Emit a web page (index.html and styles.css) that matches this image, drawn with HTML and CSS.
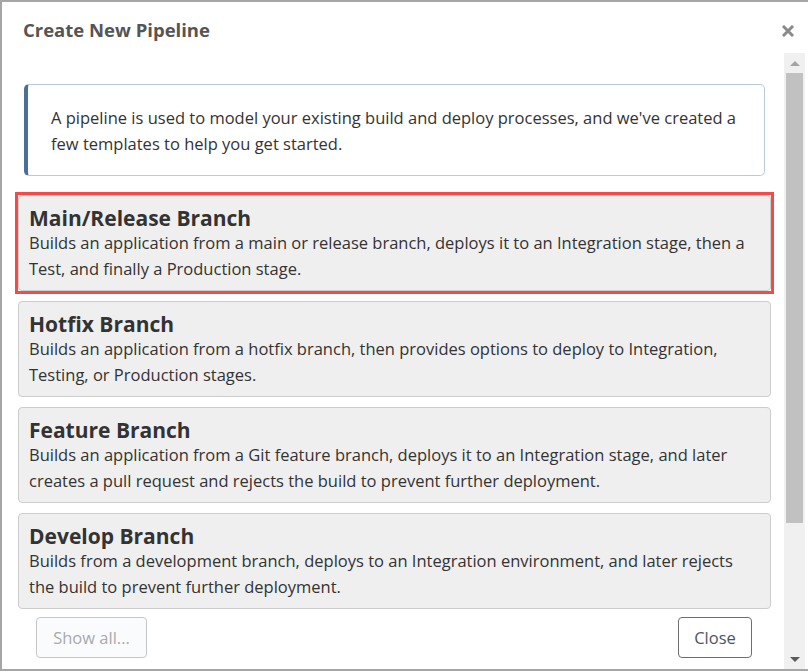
FILE: index.html
```html
<!DOCTYPE html>
<html>
<head>
<meta charset="utf-8">
<link rel="stylesheet" href="styles.css">
</head>
<body>
<div class="frame">
  <div class="header">
    <h1 class="title">Create New Pipeline</h1>
    <span class="close-x" aria-label="Close">
      <svg width="12" height="12" viewBox="0 0 12 12"><path d="M2 2 L10 10 M10 2 L2 10" stroke="#8a8a8a" stroke-width="3" stroke-linecap="square"/></svg>
    </span>
  </div>
  <div class="body">
    <div class="content">
      <div class="info">A pipeline is used to model your existing build and deploy processes, and we've created a few templates to help you get started.</div>
      <div class="cards">
        <div class="card selected">
          <div class="card-title">Main/Release Branch</div>
          <div class="card-desc">Builds an application from a main or release branch, deploys it to an Integration stage, then a Test, and finally a Production stage.</div>
        </div>
        <div class="card">
          <div class="card-title">Hotfix Branch</div>
          <div class="card-desc">Builds an application from a hotfix branch, then provides options to deploy to Integration, Testing, or Production stages.</div>
        </div>
        <div class="card">
          <div class="card-title">Feature Branch</div>
          <div class="card-desc">Builds an application from a Git feature branch, deploys it to an Integration stage, and later creates a pull request and rejects the build to prevent further deployment.</div>
        </div>
        <div class="card">
          <div class="card-title">Develop Branch</div>
          <div class="card-desc">Builds from a development branch, deploys to an Integration environment, and later rejects the build to prevent further deployment.</div>
        </div>
      </div>
      <div class="footer">
        <button class="btn btn-disabled" disabled>Show all...</button>
        <button class="btn btn-close">Close</button>
      </div>
    </div>
    <div class="scrollbar">
      <div class="arrow up"></div>
      <div class="thumb"></div>
      <div class="track-rest"></div>
      <div class="arrow down"></div>
    </div>
  </div>
</div>
</body>
</html>
```

FILE: styles.css
```css
* { box-sizing: border-box; }
html, body { margin: 0; padding: 0; background: #fff; }
body {
  font-family: "Open Sans", "Noto Sans", sans-serif;
  color: #333;
  width: 808px;
  height: 671px;
  overflow: hidden;
}
.frame {
  width: 808px;
  height: 671px;
  border-top: 2px solid #a6a6a6;
  border-left: 2px solid #a6a6a6;
  border-bottom: 2px solid #a6a6a6;
  display: flex;
  flex-direction: column;
}
.header {
  height: 51px;
  flex: none;
  display: flex;
  align-items: center;
  justify-content: space-between;
  padding: 4px 14px 0 21px;
}
.title {
  margin: 0;
  font-size: 18.5px;
  font-weight: 700;
  color: #555;
}
.close-x { display: flex; margin-top: 2px; }
.body {
  flex: 1;
  display: flex;
  padding-right: 3px;
  min-height: 0;
}
.content {
  flex: 1;
  display: flex;
  flex-direction: column;
  padding: 31px 13px 0 16px;
}
.info {
  margin: 0 6px 19px 6px;
  border: 1px solid #b9c9dc;
  border-left: 4px solid #4a6f99;
  border-radius: 5px;
  padding: 20px 18px 18px 23px;
  font-size: 16.5px;
  line-height: 26px;
  color: #333;
}
.cards {
  display: flex;
  flex-direction: column;
  gap: 10px;
}
.card {
  position: relative;
  background: #efefef;
  border: 1px solid #cdcdcd;
  border-radius: 4px;
  padding: 10px 8px 8px 10px;
  height: 96px;
}
.card.selected::after {
  content: "";
  position: absolute;
  top: -4px; left: -4px; right: -4px; bottom: -4px;
  border: 3px solid #f44a4a;
  pointer-events: none;
}
.card-title {
  font-size: 21px;
  font-weight: 700;
  line-height: 24px;
  color: #333;
}
.card-desc {
  font-size: 16.5px;
  line-height: 26px;
  color: #333;
}
.footer {
  display: flex;
  justify-content: space-between;
  padding: 8px 19px 0 18px;
}
.btn {
  height: 41px;
  border-radius: 4px;
  font-family: inherit;
  font-size: 16.5px;
  padding: 0 10px;
  background: #fff;
}
.btn-disabled {
  width: 111px;
  border: 1px solid #c4c6ca;
  color: #a9aaac;
  background: #fafbfc;
}
.btn-close {
  width: 74px;
  border: 1px solid #6e6e6e;
  color: #4b5563;
}
.scrollbar {
  width: 21px;
  flex: none;
  background: #f0f0f0;
  display: flex;
  flex-direction: column;
  align-items: center;
}
.arrow {
  width: 0; height: 0;
  border-left: 5px solid transparent;
  border-right: 5px solid transparent;
  flex: none;
}
.arrow.up { border-bottom: 5px solid #a3a3a3; margin: 8px 0 7px; }
.arrow.down { border-top: 5px solid #5a5a5a; margin: 8px 0 7px; }
.thumb {
  width: 17px;
  height: 450px;
  background: #c1c1c1;
  flex: none;
}
.track-rest { flex: 1; }
```
